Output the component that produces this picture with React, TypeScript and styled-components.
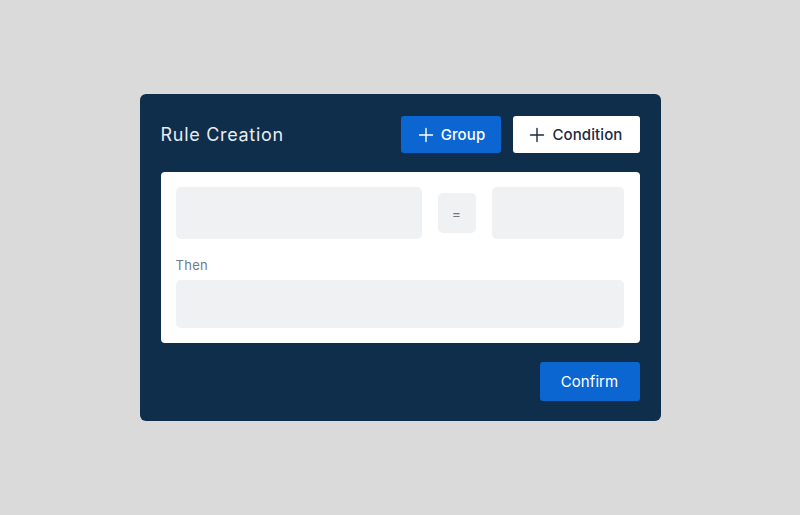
import React from 'react';
import styled, { createGlobalStyle } from 'styled-components';

const GlobalStyle = createGlobalStyle`
  html, body {
    margin: 0;
    padding: 0;
    background: #dadada;
    font-family: Inter, "Noto Sans", sans-serif;
  }
`;

const Page = styled.div`
  width: 800px;
  height: 515px;
  display: flex;
  align-items: flex-start;
  justify-content: center;
  padding-top: 94px;
  box-sizing: border-box;
`;

const Card = styled.div`
  width: 521px;
  box-sizing: border-box;
  background: #0f2e4c;
  border-radius: 6px;
  padding: 22px 21px 20px;
  display: flex;
  flex-direction: column;
  gap: 19px;
`;

const Header = styled.div`
  display: flex;
  align-items: center;
  gap: 12px;
`;

const Title = styled.h2`
  flex: 1;
  margin: 0;
  font-size: 18px;
  font-weight: 400;
  letter-spacing: 0.7px;
  color: #e8ecf1;
`;

const Button = styled.button<{ variant?: 'primary' | 'light' }>`
  height: 37px;
  display: flex;
  align-items: center;
  justify-content: center;
  gap: 7px;
  border: none;
  border-radius: 3px;
  font-family: inherit;
  font-size: 15px;
  font-weight: 500;
  letter-spacing: 0.1px;
  cursor: pointer;
  padding: ${p => (p.variant === 'light' ? '0 17px 0 16px' : '0')};
  width: ${p => (p.variant === 'light' ? 'auto' : '100px')};
  background: ${p => (p.variant === 'light' ? '#ffffff' : '#0b66d2')};
  color: ${p => (p.variant === 'light' ? '#1b2b3f' : '#ffffff')};
`;

const ConfirmButton = styled(Button)`
  height: 39px;
  align-self: flex-end;
  font-weight: 400;
`;

const Panel = styled.div`
  background: #ffffff;
  border-radius: 4px;
  padding: 15px 16px 15px 15px;
  display: flex;
  flex-direction: column;
`;

const Row = styled.div`
  display: flex;
  align-items: center;
  gap: 16px;
`;

const Field = styled.div<{ w?: number; h?: number }>`
  flex: ${p => (p.w ? `0 0 ${p.w}px` : '1 1 auto')};
  height: ${p => p.h ?? 52}px;
  background: #f0f1f3;
  border-radius: 5px;
`;

const Operator = styled.div`
  width: 38px;
  height: 40px;
  background: #f0f1f3;
  border-radius: 5px;
  display: flex;
  align-items: center;
  justify-content: center;
  font-size: 14px;
  color: #6e7987;
`;

const Label = styled.div`
  margin: 18px 0 7px;
  font-size: 13px;
  letter-spacing: 0.3px;
  color: #6f7b8a;
`;

const Plus = ({ color }: { color: string }) => (
  <svg width="16" height="16" viewBox="0 0 16 16" fill="none">
    <path d="M8 1.5v13M1.5 8h13" stroke={color} strokeWidth="1.4" strokeLinecap="round" />
  </svg>
);

export default function App() {
  return (
    <>
      <GlobalStyle />
      <Page>
        <Card>
          <Header>
            <Title>Rule Creation</Title>
            <Button variant="primary">
              <Plus color="#ffffff" />
              Group
            </Button>
            <Button variant="light">
              <Plus color="#1b2b3f" />
              Condition
            </Button>
          </Header>
          <Panel>
            <Row>
              <Field w={246} />
              <Operator>=</Operator>
              <Field />
            </Row>
            <Label>Then</Label>
            <Field h={48} />
          </Panel>
          <ConfirmButton variant="primary">Confirm</ConfirmButton>
        </Card>
      </Page>
    </>
  );
}
